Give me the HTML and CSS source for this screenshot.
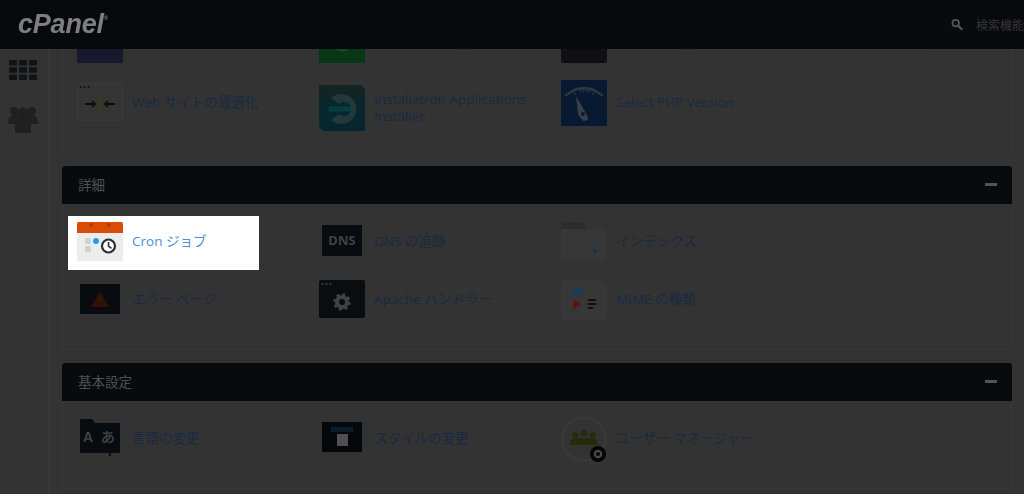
FILE: index.html
```html
<!DOCTYPE html>
<html lang="ja">
<head>
<meta charset="utf-8">
<title>cPanel</title>
<link rel="stylesheet" href="styles.css">
</head>
<body>
<header class="topbar">
  <span class="logo">cPanel<sup class="tm">®</sup></span>
  <div class="search">
    <svg class="search-icon" viewBox="0 0 14 14" width="13" height="13"><circle cx="5.5" cy="5.5" r="3.8" fill="none" stroke="#565656" stroke-width="2"/><path d="M8.5 8.5l4 4" stroke="#565656" stroke-width="2.4" stroke-linecap="round"/></svg>
    <span class="search-text">検索機能</span>
  </div>
</header>
<div class="layout">
  <aside class="sidebar">
    <svg class="side-icon" viewBox="0 0 28 22" width="28" height="22"><g fill="#101419"><rect x="0" y="1" width="8" height="5.5" rx="1"/><rect x="10" y="1" width="8" height="5.5" rx="1"/><rect x="20" y="1" width="8" height="5.5" rx="1"/><rect x="0" y="8.2" width="8" height="5.5" rx="1"/><rect x="10" y="8.2" width="8" height="5.5" rx="1"/><rect x="20" y="8.2" width="8" height="5.5" rx="1"/><rect x="0" y="15.4" width="8" height="5.5" rx="1"/><rect x="10" y="15.4" width="8" height="5.5" rx="1"/><rect x="20" y="15.4" width="8" height="5.5" rx="1"/></g></svg>
    <svg class="side-icon" viewBox="0 0 30 28" width="30" height="28"><g fill="#202020"><circle cx="6" cy="6" r="4"/><circle cx="24" cy="6" r="4"/><circle cx="15" cy="8" r="5.500"/><path d="M0 19c0-6 2-9 6-9h18c4 0 6 3 6 9h-7v8c0 .6-.5 1-1 1H8c-.5 0-1-.4-1-1v-8z"/></g></svg>
  </aside>
  <main class="content">
    <section class="panel panel-scrolled">
      <div class="panel-body">
        <div class="item">
          <svg class="icon icon-dim" viewBox="0 0 47 39"><rect x="0" y="0" width="46" height="38" rx="2" fill="#20203a"/><circle cx="23" cy="-2" r="10" fill="#2e2d44"/></svg>
          <span class="label label-clipped">&nbsp;</span>
        </div>
        <div class="item">
          <svg class="icon icon-dim" viewBox="0 0 47 39"><rect x="0" y="0" width="46" height="38" rx="2" fill="#084a1c"/><circle cx="23" cy="18" r="9" fill="#26573a"/></svg>
          <span class="label label-clipped">Softaculous Apps</span>
        </div>
        <div class="item">
          <svg class="icon icon-dim" viewBox="0 0 47 39"><rect x="0" y="0" width="46" height="38" rx="2" fill="#15141c"/><path d="M15 16h16l-3 7h-10z" fill="#46464a"/></svg>
          <span class="label label-clipped">Web Site Apps</span>
        </div>
        <div class="item">
          <svg class="icon icon-soft" viewBox="0 0 47 39"><rect x=".5" y=".5" width="45" height="37" rx="2" fill="#343434" stroke="#3a3a3a"/><g fill="#0f0f0f"><circle cx="3.5" cy="4" r="1"/><circle cx="7.5" cy="4" r="1"/><circle cx="11.5" cy="4" r="1"/><path d="M8 20h7v-3l4.500 4-4.500 4v-3H8z"/><path d="M38 20h-7v-3l-4.500 4 4.500 4v-3h7z"/></g><path d="M21.500 11c1.500 3 1.500 17 0 20M24.500 11c-1.500 3-1.500 17 0 20" fill="none" stroke="#333f12" stroke-width="1.300"/></svg>
          <span class="label">Web サイトの最適化</span>
        </div>
        <div class="item item-low">
          <svg class="icon icon-dim" viewBox="0 0 47 46"><path d="M0 2q0-2 2-2h37q7 0 7 7v37q0 2-2 2H7q-7 0-7-7z" fill="#06343c"/><path d="M0 2q0-2 2-2h37q7 0 7 7v7H0z" fill="#18302f"/><path d="M12 13a15 15 0 1 1 0 22l8-6a7 7 0 1 0 0-10z" fill="#304a4c"/><rect x="10" y="21.500" width="22" height="5" fill="#0a5058"/></svg>
          <span class="label">Installatron Applications Installer</span>
        </div>
        <div class="item">
          <svg class="icon icon-dim" viewBox="0 0 47 46"><rect width="46" height="46" fill="#0b2342"/><path d="M4 16q19-16 38 0" fill="none" stroke="#3e4a58" stroke-width="2.500"/><path d="M14 15l-.5-3M32 15l.5-3" stroke="#3e4a58"/><path d="M15 16l11 19 1 5-5 1-5-7z" fill="#4c5662"/><circle cx="22" cy="34" r="2" fill="#0b2342"/><text x="24" y="13" class="php">PHP</text></svg>
          <span class="label">Select PHP Version</span>
        </div>
      </div>
    </section>

    <section class="panel panel-details">
      <h2 class="panel-title"><span>詳細</span><span class="minus"></span></h2>
      <div class="panel-body">
        <div class="item item-active">
          <svg class="icon icon-soft" viewBox="0 0 47 39"><path d="M0 11h46v26q0 2-2 2H2q-2 0-2-2z" fill="#ececec"/><path d="M2 0h42q2 0 2 2v9H0V2q0-2 2-2z" fill="#db4b05"/><circle cx="14" cy="3" r="2" fill="#b23c05"/><circle cx="32" cy="3" r="2" fill="#b23c05"/><rect x="8" y="16" width="6" height="6" rx="2" fill="#d0d0d0"/><rect x="8" y="24" width="6" height="6" rx="2" fill="#d0d0d0"/><circle cx="19" cy="19" r="3" fill="#1e9fe8"/><circle cx="31.500" cy="24" r="6.500" fill="#fff" stroke="#2a2f36" stroke-width="2.200"/><path d="M31.500 20v4.200l3 2.200" fill="none" stroke="#2a2f36" stroke-width="1.600"/></svg>
          <span class="label">Cron ジョブ</span>
        </div>
        <div class="item">
          <svg class="icon icon-dim" viewBox="0 0 47 39"><rect x="3" y="3" width="40" height="31" fill="#0b0f14"/><text x="23" y="23" class="dns">DNS</text></svg>
          <span class="label">DNS の追跡</span>
        </div>
        <div class="item">
          <svg class="icon icon-soft" viewBox="0 0 47 39"><path d="M0 3q0-3 3-3h17q3 0 5 7h17q3 0 3 3v26q0 2-2 2H2q-2 0-2-2z" fill="#373737"/><path d="M0 3q0-3 3-3h17q3 0 5 7H0z" fill="#2c2c2c"/><circle cx="34" cy="29" r="2" fill="#0c3556"/></svg>
          <span class="label">インデックス</span>
        </div>
        <div class="item">
          <svg class="icon icon-dim" viewBox="0 0 47 39"><rect x="3" y="4" width="40" height="30" fill="#0b0f14"/><path d="M23 11l9 16H14z" fill="#431608"/><path d="M23 16v6" stroke="#3c2a22" stroke-width="1.500"/></svg>
          <span class="label">エラー ページ</span>
        </div>
        <div class="item">
          <svg class="icon icon-dim" viewBox="0 0 47 39"><rect width="46" height="38" rx="2" fill="#0c1116"/><g fill="#585858"><circle cx="3.500" cy="4" r="1"/><circle cx="7.500" cy="4" r="1"/><circle cx="11.500" cy="4" r="1"/></g><circle cx="23" cy="22" r="5" fill="none" stroke="#585858" stroke-width="4"/><circle cx="23" cy="22" r="7.500" fill="none" stroke="#585858" stroke-width="2.500" stroke-dasharray="3 2.900"/></svg>
          <span class="label">Apache ハンドラー</span>
        </div>
        <div class="item">
          <svg class="icon icon-soft" viewBox="0 0 47 39"><path d="M0 2q0-2 2-2h37l7 7v30q0 2-2 2H2q-2 0-2-2z" fill="#373737"/><path d="M11 15q-1-5 4-5q2-3 5 0q3 0 2 4z" fill="#0e3f66"/><path d="M28 14V6l5-1v8" fill="none" stroke="#343e16" stroke-width="1.500"/><path d="M12 19l8 5-8 6z" fill="#5e160c"/><path d="M27 20h8M27 24h8M27 28h5" stroke="#0f0f0f" stroke-width="1.800"/></svg>
          <span class="label">MIME の種類</span>
        </div>
      </div>
    </section>

    <section class="panel">
      <h2 class="panel-title"><span>基本設定</span><span class="minus"></span></h2>
      <div class="panel-body">
        <div class="item">
          <svg class="icon icon-dim" viewBox="0 0 47 39"><path d="M3 0h12l3 4h25v30H34v3H32v-3H3z" fill="#0b0f14"/><text x="11" y="23" class="lang">A</text><text x="31" y="23" class="lang">あ</text></svg>
          <span class="label">言語の変更</span>
        </div>
        <div class="item">
          <svg class="icon icon-dim" viewBox="0 0 47 39"><rect x="3" y="3" width="40" height="30" fill="#060a0f"/><rect x="12" y="8" width="22" height="5" fill="#0e2638"/><rect x="18" y="15" width="11" height="12" fill="#6a6a6a"/></svg>
          <span class="label">スタイルの変更</span>
        </div>
        <div class="item">
          <svg class="icon icon-dim" viewBox="0 0 47 46"><circle cx="23" cy="23" r="21.500" fill="none" stroke="#4c4c4c" stroke-width="2.500"/><g fill="#303a10"><circle cx="14" cy="19" r="3"/><circle cx="23" cy="17" r="3.500"/><circle cx="32" cy="19" r="3"/><path d="M9 29q0-7 5-7h18q5 0 5 7z"/></g><circle cx="37" cy="38" r="8" fill="#060708"/><circle cx="37" cy="38" r="3.200" fill="none" stroke="#606060" stroke-width="2.200"/></svg>
          <span class="label">ユーザー マネージャー</span>
        </div>
      </div>
    </section>
  </main>
</div>
</body>
</html>
```
FILE: styles.css
```css
* { box-sizing: border-box; }

html, body {
  margin: 0;
  height: 494px;
  overflow: hidden;
}

body {
  background: #333333;
  font-family: "Open Sans", "Noto Sans CJK JP", sans-serif;
  font-size: 13.5px;
  color: #182a44;
}

.topbar {
  height: 49px;
  background: #07090c;
  display: flex;
  align-items: center;
  justify-content: space-between;
  position: relative;
  z-index: 2;
}

.logo {
  margin-left: 18px;
  font-family: "Liberation Sans", sans-serif;
  font-style: italic;
  font-weight: 700;
  font-size: 27px;
  letter-spacing: -0.2px;
  color: #7e7e7e;
  filter: blur(0.5px);
}

.tm {
  font-size: 6px;
  vertical-align: 13px;
  line-height: 0;
}

.search {
  width: 94px;
  height: 49px;
  display: flex;
  align-items: center;
  gap: 13px;
  padding-left: 21px;
  overflow: hidden;
  white-space: nowrap;
  background: #080a0d;
}

.search-text {
  font-family: "Noto Sans CJK JP", sans-serif;
  font-size: 12px;
  color: #353535;
}

.layout {
  display: flex;
  height: 445px;
}

.sidebar {
  width: 50px;
  flex: none;
  border-right: 2px solid #383838;
  display: flex;
  flex-direction: column;
  align-items: center;
  gap: 24px;
  padding: 10px 2px 0 0;
}

.content {
  flex: 1;
  min-width: 0;
  padding: 0 12px;
  overflow: hidden;
}

.panel-scrolled {
  margin-top: -42px;
  margin-bottom: 15px;
}

.panel-details {
  margin-bottom: 13px;
}

.panel-title {
  margin: 0;
  height: 38px;
  padding: 0 15px 2px 16px;
  background: #080b0e;
  border-radius: 3px 3px 0 0;
  display: flex;
  align-items: center;
  justify-content: space-between;
  font-size: 13.5px;
  font-weight: 400;
  color: #505050;
}

.minus {
  width: 12px;
  height: 3px;
  background: #555555;
}

.panel-body {
  padding: 12px 0 21px 5px;
  border: 1px solid #383838;
  border-top: 0;
  display: grid;
  grid-template-columns: repeat(3, 242px);
  grid-auto-rows: 54px;
  row-gap: 4px;
}

.panel-scrolled .panel-body {
  padding-bottom: 19px;
}

.item {
  display: flex;
  align-items: center;
  gap: 8px;
  padding: 0 0 3px 9px;
  width: 235px;
}

.item-low {
  padding: 8px 0 0 9px;
}

.item-active {
  width: 191px;
  background: #ffffff;
  color: #4a90d6;
}

.icon {
  width: 47px;
  height: auto;
  flex: none;
}

.icon-soft {
  filter: blur(0.4px);
}

.icon-dim {
  filter: blur(0.4px) brightness(0.75);
}

.label {
  max-width: 165px;
  line-height: 17.5px;
}

.label-clipped {
  margin-bottom: 3px;
}

.side-icon {
  flex: none;
}

.dns {
  font-family: "Open Sans", sans-serif;
  font-size: 13px;
  font-weight: 700;
  fill: #585858;
  text-anchor: middle;
}

.php {
  font-family: "Open Sans", sans-serif;
  font-size: 6px;
  fill: #4a545f;
  text-anchor: middle;
}

.lang {
  font-family: "Open Sans", "Noto Sans CJK JP", sans-serif;
  font-size: 14px;
  font-weight: 700;
  fill: #555555;
  text-anchor: middle;
}
```
